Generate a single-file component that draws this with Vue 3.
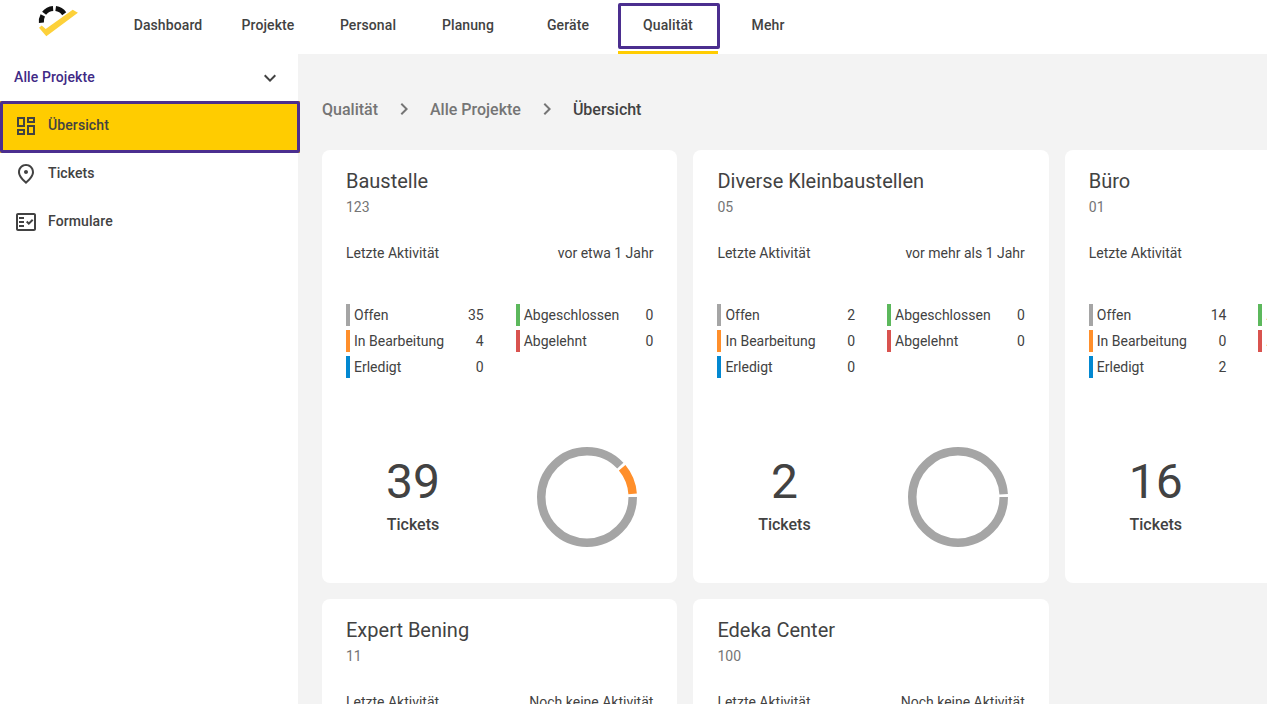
<script setup>
const nav = ['Dashboard', 'Projekte', 'Personal', 'Planung', 'Geräte', 'Qualität', 'Mehr']
const COLORS = { open: '#a5a5a5', progress: '#ff8f2b', done: '#0288d1', closed: '#5cb85c', rejected: '#d9534f' }
const cards = [
  { title: 'Baustelle', code: '123', activity: 'vor etwa 1 Jahr', open: 35, progress: 4, done: 0, closed: 0, rejected: 0 },
  { title: 'Diverse Kleinbaustellen', code: '05', activity: 'vor mehr als 1 Jahr', open: 2, progress: 0, done: 0, closed: 0, rejected: 0 },
  { title: 'Büro', code: '01', activity: 'vor etwa 1 Jahr', open: 14, progress: 0, done: 2, closed: 0, rejected: 0 },
  { title: 'Expert Bening', code: '11', activity: 'Noch keine Aktivität', open: 0, progress: 0, done: 0, closed: 0, rejected: 0 },
  { title: 'Edeka Center', code: '100', activity: 'Noch keine Aktivität', open: 0, progress: 0, done: 0, closed: 0, rejected: 0 },
]
const R = 45.75
const CIRC = 2 * Math.PI * R
const KEYS = ['open', 'progress', 'done', 'closed', 'rejected']
const total = (c) => KEYS.reduce((sum, k) => sum + c[k], 0)
function segments(c) {
  const active = KEYS.filter((k) => c[k] > 0)
  const t = active.reduce((sum, k) => sum + c[k] + 0.4, 0)
  let offset = 0
  return active.map((k) => {
    const frac = (c[k] + 0.4) / t
    const seg = { color: COLORS[k], dash: `${frac * CIRC - 3.2} ${CIRC}`, rotate: offset * 360 }
    offset += frac
    return seg
  })
}
</script>

<template>
  <div class="app">
    <header class="topbar">
      <div class="logo">
        <svg width="118" height="54" viewBox="0 0 118 54">
          <path d="M41.4 22.8A12.5 12.5 0 0 1 42.8 15.4M44.1 13.3A12.5 12.5 0 0 1 53.1 8.5M55.7 8.6A12.5 12.5 0 0 1 64.2 13.7" fill="none" stroke="#111" stroke-width="5" />
          <path d="M39 27.7L46.3 36.2L77.9 12.7L72.7 9.8L45.7 29L41.7 25.6Z" fill="#fdd13a" />
        </svg>
      </div>
      <nav class="nav">
        <a v-for="n in nav" :key="n" class="nav-item" :class="{ active: n === 'Qualität' }">{{ n }}</a>
      </nav>
    </header>
    <div class="body">
      <aside class="side">
        <div class="side-head">
          <span>Alle Projekte</span>
          <svg width="24" height="24" viewBox="0 0 24 24"><path d="M7.41 8.59L12 13.17l4.59-4.58L18 10l-6 6-6-6z" fill="#424242" /></svg>
        </div>
        <div class="side-item active">
          <svg width="24" height="24" viewBox="0 0 24 24"><path d="M19 5v2h-4V5h4M9 5v6H5V5h4m10 8v6h-4v-6h4M9 17v2H5v-2h4M21 3h-8v6h8V3zM11 3H3v10h8V3zm10 8h-8v10h8V11zm-10 4H3v6h8v-6z" fill="#424242" /></svg>
          <span>Übersicht</span>
        </div>
        <div class="side-item">
          <svg width="24" height="24" viewBox="0 0 24 24"><path d="M12 12c-1.1 0-2-.9-2-2s.9-2 2-2 2 .9 2 2-.9 2-2 2zm6-1.8C18 6.57 15.35 4 12 4s-6 2.57-6 6.2c0 2.34 1.95 5.44 6 9.14 4.05-3.7 6-6.8 6-9.14zM12 2c4.2 0 8 3.22 8 8.2 0 3.32-2.67 7.25-8 11.8-5.33-4.55-8-8.48-8-11.8C4 5.22 7.8 2 12 2z" fill="#424242" /></svg>
          <span>Tickets</span>
        </div>
        <div class="side-item">
          <svg width="24" height="24" viewBox="0 0 24 24"><path d="M20 3H4c-1.1 0-2 .9-2 2v14c0 1.1.9 2 2 2h16c1.1 0 2-.9 2-2V5c0-1.1-.9-2-2-2zm0 16H4V5h16v14z M19.41 10.42L17.99 9l-3.17 3.17-1.41-1.42L12 12.16 14.82 15z M5 7h5v2H5z M5 11h5v2H5z M5 15h5v2H5z" fill="#424242" /></svg>
          <span>Formulare</span>
        </div>
      </aside>
      <main class="main">
        <div class="crumbs">
          <span>Qualität</span>
          <svg width="24" height="24" viewBox="0 0 24 24"><path d="M10 6L8.59 7.41 13.17 12l-4.58 4.59L10 18l6-6z" fill="#757575" /></svg>
          <span>Alle Projekte</span>
          <svg width="24" height="24" viewBox="0 0 24 24"><path d="M10 6L8.59 7.41 13.17 12l-4.58 4.59L10 18l6-6z" fill="#757575" /></svg>
          <span class="current">Übersicht</span>
        </div>
        <div class="grid">
          <section v-for="c in cards" :key="c.title" class="card">
            <h2 class="title">{{ c.title }}</h2>
            <div class="code">{{ c.code }}</div>
            <div class="activity"><span>Letzte Aktivität</span><span>{{ c.activity }}</span></div>
            <div class="stats">
              <div class="col">
                <div class="stat"><i class="bar" :style="{ background: COLORS.open }"></i><span>Offen</span><b>{{ c.open }}</b></div>
                <div class="stat"><i class="bar" :style="{ background: COLORS.progress }"></i><span>In Bearbeitung</span><b>{{ c.progress }}</b></div>
                <div class="stat"><i class="bar" :style="{ background: COLORS.done }"></i><span>Erledigt</span><b>{{ c.done }}</b></div>
              </div>
              <div class="col">
                <div class="stat"><i class="bar" :style="{ background: COLORS.closed }"></i><span>Abgeschlossen</span><b>{{ c.closed }}</b></div>
                <div class="stat"><i class="bar" :style="{ background: COLORS.rejected }"></i><span>Abgelehnt</span><b>{{ c.rejected }}</b></div>
              </div>
            </div>
            <div class="summary">
              <div class="count">
                <div class="num">{{ total(c) }}</div>
                <div class="lbl">Tickets</div>
              </div>
              <svg class="ring" width="100" height="100" viewBox="0 0 100 100">
                <circle
                  v-for="(s, i) in segments(c)"
                  :key="i"
                  cx="50" cy="50" :r="R"
                  fill="none"
                  stroke-width="8.5"
                  :stroke="s.color"
                  :stroke-dasharray="s.dash"
                  :transform="`rotate(${s.rotate} 50 50)`"
                />
              </svg>
            </div>
          </section>
        </div>
      </main>
    </div>
  </div>
</template>

<style>
html, body { margin: 0; height: 100%; overflow: hidden; background: #fff; }
</style>

<style scoped>
.app {
  width: 1267px;
  height: 704px;
  overflow: hidden;
  display: flex;
  flex-direction: column;
  font-family: Roboto, "Liberation Sans", sans-serif;
  color: #424242;
  font-size: 14px;
}
.topbar { height: 54px; display: flex; background: #fff; flex: none; }
.logo { width: 118px; height: 54px; flex: none; }
.logo svg { display: block; }
.nav { display: flex; }
.nav-item {
  position: relative;
  width: 100px;
  height: 51px;
  line-height: 50px;
  text-align: center;
  font-weight: 500;
  font-size: 14px;
  letter-spacing: 0.1px;
  color: #424242;
}
.nav-item.active { border-bottom: 3px solid #ffcc00; }
.nav-item.active::after {
  content: "";
  position: absolute;
  left: 0;
  top: 3px;
  width: 102px;
  height: 46px;
  box-sizing: border-box;
  border: 3px solid #4b2e8f;
  border-radius: 2px;
}
.body { flex: 1; display: flex; min-height: 0; }
.side { width: 298px; flex: none; background: #fff; }
.side-head {
  height: 47px;
  display: flex;
  align-items: center;
  justify-content: space-between;
  padding: 0 16px 0 14px;
  font-weight: 500;
  letter-spacing: 0.1px;
  color: #3f2a85;
}
.side-head span { padding-bottom: 2px; }
.side-item {
  height: 48px;
  display: flex;
  align-items: center;
  gap: 10px;
  padding-left: 14px;
  font-weight: 500;
  letter-spacing: 0.1px;
  box-sizing: border-box;
}
.side-item svg { margin-top: 2px; }
.side-item.active {
  position: relative;
  width: 299.5px;
  height: 51.5px;
  margin-bottom: -3.5px;
  padding: 0 0 3.5px 14px;
  background: #ffcc00;
}
.side-item.active::after {
  content: "";
  position: absolute;
  inset: 0;
  border: 3px solid #4b2e8f;
  border-radius: 2px;
}
.side-item.active svg, .side-item.active span { position: relative; z-index: 1; }
.main { flex: 1; min-width: 0; background: #f3f3f3; padding: 43px 0 0 24px; overflow: hidden; }
.crumbs {
  display: flex;
  align-items: center;
  gap: 14px;
  height: 24px;
  font-size: 16px;
  font-weight: 500;
  color: #757575;
}
.crumbs .current { color: #424242; }
.grid {
  display: grid;
  grid-template-columns: repeat(3, 355.4px);
  gap: 16px;
  margin-top: 29px;
}
.card {
  background: #fff;
  border-radius: 8px;
  height: 433px;
  padding: 19px 24px 0;
  box-sizing: border-box;
}
.title { margin: 0; font-size: 20px; font-weight: 400; line-height: 24px; color: #424242; }
.code { margin-top: 5px; line-height: 18px; color: #757575; }
.activity {
  display: flex;
  justify-content: space-between;
  margin-top: 28px;
  line-height: 18px;
}
.stats { display: flex; gap: 32px; margin-top: 42px; }
.col { width: 137.7px; display: flex; flex-direction: column; gap: 4px; }
.stat {
  height: 22px;
  display: flex;
  align-items: center;
  line-height: 22px;
}
.bar { width: 4px; height: 22px; margin-right: 4px; flex: none; }
.stat b { margin-left: auto; font-weight: 400; }
.summary { display: flex; margin-top: 69px; justify-content: space-between; align-items: flex-start; padding-right: 16.5px; }
.count { width: 134px; text-align: center; margin-top: 6px; }
.num { font-size: 48px; line-height: 58px; font-weight: 400; color: #424242; }
.lbl { font-size: 16px; font-weight: 500; line-height: 24px; margin-top: 2px; }
.ring { display: block; flex: none; }
</style>
